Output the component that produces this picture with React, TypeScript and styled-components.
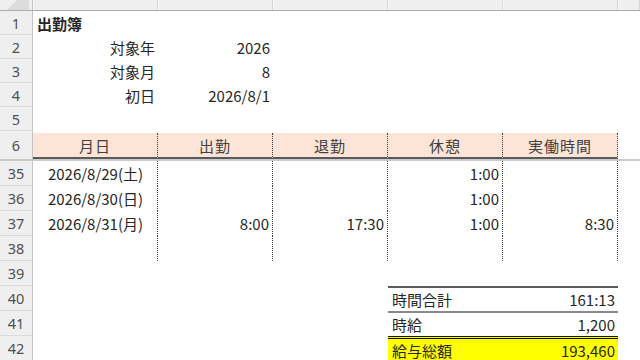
import styled, { createGlobalStyle } from "styled-components";

const GlobalStyle = createGlobalStyle`
	html, body {
		margin: 0;
		padding: 0;
		background: #ffffff;
	}
	body {
		font-family: "Noto Sans CJK JP", "Noto Sans", sans-serif;
	}
`;

const COLS = "33px 125px 115px 115px 115px 115px 1fr";

const Sheet = styled.div`
	width: 640px;
	height: 360px;
	overflow: hidden;
	display: flex;
	flex-direction: column;
	background: #ffffff;
`;

const ColumnStrip = styled.div`
	display: grid;
	grid-template-columns: ${COLS};
	height: 10px;
	flex: none;
	background: #efefef;
	border-bottom: 1px solid #ababab;
`;

const ColumnHead = styled.div`
	border-right: 1px solid #d6d6d6;
	box-shadow: inset 1px 0 0 #f8f8f8;
`;

const Corner = styled.div`
	position: relative;
	border-right: 1px solid #c4c4c4;
	overflow: hidden;
	svg {
		position: absolute;
		right: 3px;
		bottom: 0;
	}
`;

const Row = styled.div<{ $h: number; $frozen?: boolean }>`
	display: grid;
	grid-template-columns: ${COLS};
	height: ${(p) => p.$h}px;
	flex: none;
	box-sizing: border-box;
	${(p) => p.$frozen && "border-bottom: 2px solid #c9c9c9;"}
`;

const RowHead = styled.div<{ $last?: boolean }>`
	display: flex;
	align-items: center;
	justify-content: center;
	background: #efefef;
	border-right: 1px solid #c4c4c4;
	border-bottom: ${(p) => (p.$last ? "none" : "1px solid #dadada")};
	box-sizing: border-box;
	font-family: "Noto Sans", "Liberation Sans", sans-serif;
	font-size: 14.5px;
	color: #505050;
`;

type Align = "left" | "right" | "center";

const Cell = styled.div<{
	$align?: Align;
	$bold?: boolean;
	$dotted?: boolean;
}>`
	display: flex;
	align-items: center;
	justify-content: ${(p) =>
		p.$align === "right" ? "flex-end" : p.$align === "center" ? "center" : "flex-start"};
	padding: 0 3px 0 4px;
	box-sizing: border-box;
	white-space: nowrap;
	font-size: 15px;
	font-weight: ${(p) => (p.$bold ? 700 : 400)};
	color: #262626;
	${(p) => p.$dotted && "border-right: 1px dotted #3c3c3c;"}
`;

const HeaderCell = styled.div`
	display: flex;
	align-items: center;
	justify-content: center;
	margin-top: 2px;
	background: #fce4d6;
	border-right: 1px dotted #3c3c3c;
	border-bottom: 2px solid #5a5a5a;
	box-sizing: border-box;
	font-size: 15px;
	letter-spacing: 1px;
	color: #404040;
`;

type Rule = "top" | "mid" | "double";

const SumCell = styled.div<{ $rule: Rule; $align?: Align; $fill?: string }>`
	display: flex;
	align-items: center;
	justify-content: ${(p) => (p.$align === "right" ? "flex-end" : "flex-start")};
	padding: 0 3px 0 4px;
	box-sizing: border-box;
	font-size: 15px;
	color: #262626;
	background: ${(p) => p.$fill ?? "transparent"};
	border-top: ${(p) =>
		p.$rule === "top"
			? "2px solid #5c5c5c"
			: p.$rule === "mid"
				? "2px solid #8a8a8a"
				: "3px double #111111"};
`;

const headers = ["月日", "出勤", "退勤", "休憩", "実働時間"];

const days = [
	{ n: 35, date: "2026/8/29(土)", in: "", out: "", rest: "1:00", work: "" },
	{ n: 36, date: "2026/8/30(日)", in: "", out: "", rest: "1:00", work: "" },
	{ n: 37, date: "2026/8/31(月)", in: "8:00", out: "17:30", rest: "1:00", work: "8:30" },
	{ n: 38, date: "", in: "", out: "", rest: "", work: "" },
];

const meta = [
	{ n: 2, label: "対象年", value: "2026" },
	{ n: 3, label: "対象月", value: "8" },
	{ n: 4, label: "初日", value: "2026/8/1" },
];

const totals: { n: number; label: string; value: string; rule: Rule; fill?: string }[] = [
	{ n: 40, label: "時間合計", value: "161:13", rule: "top" },
	{ n: 41, label: "時給", value: "1,200", rule: "mid" },
	{ n: 42, label: "給与総額", value: "193,460", rule: "double", fill: "#ffff00" },
];

function CornerMark() {
	return (
		<svg width="22" height="10" viewBox="0 0 22 10">
			<polygon points="22,-12 22,10 0,10" fill="#dcdcdc" />
		</svg>
	);
}

export default function App() {
	return (
		<Sheet>
			<GlobalStyle />
			<ColumnStrip>
				<Corner>
					<CornerMark />
				</Corner>
				<ColumnHead />
				<ColumnHead />
				<ColumnHead />
				<ColumnHead />
				<ColumnHead />
				<ColumnHead />
			</ColumnStrip>

			<Row $h={24}>
				<RowHead>1</RowHead>
				<Cell $bold>出勤簿</Cell>
			</Row>
			{meta.map((m) => (
				<Row key={m.n} $h={24}>
					<RowHead>{m.n}</RowHead>
					<Cell $align="right">{m.label}</Cell>
					<Cell $align="right">{m.value}</Cell>
				</Row>
			))}
			<Row $h={24}>
				<RowHead>5</RowHead>
			</Row>

			<Row $h={30} $frozen>
				<RowHead $last>6</RowHead>
				{headers.map((h) => (
					<HeaderCell key={h}>{h}</HeaderCell>
				))}
			</Row>

			{days.map((d) => (
				<Row key={d.n} $h={25}>
					<RowHead>{d.n}</RowHead>
					<Cell $align="center" $dotted>
						{d.date}
					</Cell>
					<Cell $align="right" $dotted>
						{d.in}
					</Cell>
					<Cell $align="right" $dotted>
						{d.out}
					</Cell>
					<Cell $align="right" $dotted>
						{d.rest}
					</Cell>
					<Cell $align="right" $dotted>
						{d.work}
					</Cell>
				</Row>
			))}

			<Row $h={25}>
				<RowHead>39</RowHead>
			</Row>

			{totals.map((t) => (
				<Row key={t.n} $h={25}>
					<RowHead>{t.n}</RowHead>
					<Cell />
					<Cell />
					<Cell />
					<SumCell $rule={t.rule} $fill={t.fill}>
						{t.label}
					</SumCell>
					<SumCell $rule={t.rule} $fill={t.fill} $align="right">
						{t.value}
					</SumCell>
				</Row>
			))}
		</Sheet>
	);
}
